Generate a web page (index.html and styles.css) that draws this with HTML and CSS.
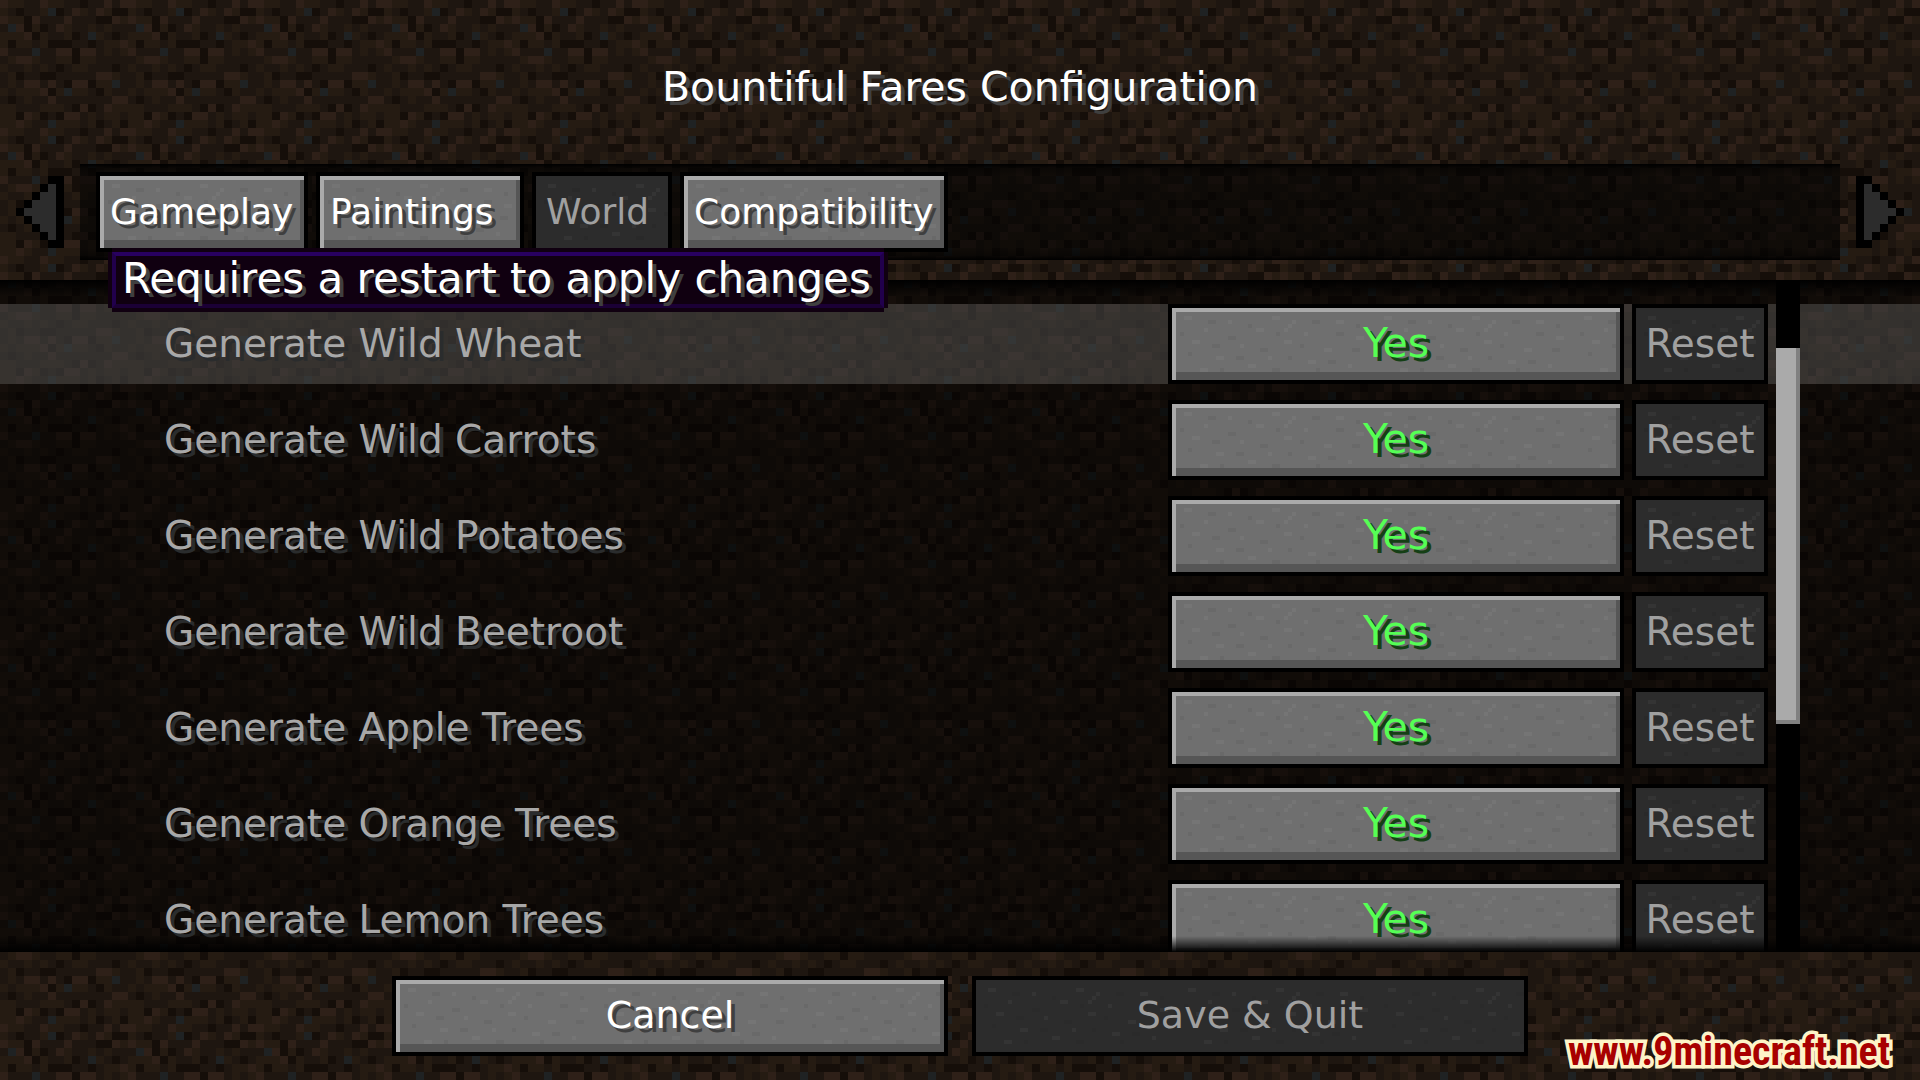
FILE: index.html
```
<!DOCTYPE html>
<html lang="en">
<head>
	<meta charset="UTF-8">
	<meta name="viewport" content="width=device-width, initial-scale=1.0">
	<title>Bountiful Fares Configuration</title>
	<link rel="stylesheet" href="styles.css">
</head>
<body>
	<header>
		<h1>Bountiful Fares Configuration</h1>
		<nav class="tab-nav">
			<button type="button" class="arrow" aria-label="Previous tabs" disabled>
				<svg viewBox="0 0 6 9" shape-rendering="crispEdges">
					<path fill="#000" d="M6 0v9H4V8H3V7H2V6H1V5H0V4h1V3h1V2h1V1h1V0z"/>
					<path fill="#2c2c2c" d="M5 1v7H4V7H3V6H2V5H1V4h1V3h1V2h1V1z"/>
				</svg>
			</button>
			<div class="tabs">
				<button type="button" class="btn tab tab-gameplay">Gameplay</button>
				<button type="button" class="btn tab tab-paintings">Paintings</button>
				<button type="button" class="btn tab tab-world" disabled>World</button>
				<button type="button" class="btn tab tab-compat">Compatibility</button>
				<div class="tooltip" role="tooltip">Requires a restart to apply changes</div>
			</div>
			<button type="button" class="arrow" aria-label="Next tabs" disabled>
				<svg viewBox="0 0 6 9" shape-rendering="crispEdges">
					<path fill="#000" d="M0 0v9h2V8h1V7h1V6h1V5h1V4H5V3H4V2H3V1H2V0z"/>
					<path fill="#2c2c2c" d="M1 1v7h1V7h1V6h1V5h1V4H4V3H3V2H2V1z"/>
				</svg>
			</button>
		</nav>
	</header>

	<main class="options">
		<div class="row active">
			<label for="wheat">Generate Wild Wheat</label>
			<button type="button" class="btn value" id="wheat">Yes</button>
			<button type="button" class="btn reset" disabled>Reset</button>
		</div>
		<div class="row">
			<label for="carrots">Generate Wild Carrots</label>
			<button type="button" class="btn value" id="carrots">Yes</button>
			<button type="button" class="btn reset" disabled>Reset</button>
		</div>
		<div class="row">
			<label for="potatoes">Generate Wild Potatoes</label>
			<button type="button" class="btn value" id="potatoes">Yes</button>
			<button type="button" class="btn reset" disabled>Reset</button>
		</div>
		<div class="row">
			<label for="beetroot">Generate Wild Beetroot</label>
			<button type="button" class="btn value" id="beetroot">Yes</button>
			<button type="button" class="btn reset" disabled>Reset</button>
		</div>
		<div class="row">
			<label for="apple">Generate Apple Trees</label>
			<button type="button" class="btn value" id="apple">Yes</button>
			<button type="button" class="btn reset" disabled>Reset</button>
		</div>
		<div class="row">
			<label for="orange">Generate Orange Trees</label>
			<button type="button" class="btn value" id="orange">Yes</button>
			<button type="button" class="btn reset" disabled>Reset</button>
		</div>
		<div class="row">
			<label for="lemon">Generate Lemon Trees</label>
			<button type="button" class="btn value" id="lemon">Yes</button>
			<button type="button" class="btn reset" disabled>Reset</button>
		</div>
		<div class="scrollbar"><div class="thumb"></div></div>
	</main>

	<footer>
		<button type="button" class="btn">Cancel</button>
		<button type="button" class="btn" disabled>Save &amp; Quit</button>
	</footer>
	<a class="watermark" href="#">www.9minecraft.net</a>
</body>
</html>
```
FILE: styles.css
```
* {
	box-sizing: border-box;
}
body {
	margin: 0;
	height: 100vh;
	display: flex;
	flex-direction: column;
	overflow: hidden;
	position: relative;
	font-family: "DejaVu Sans", sans-serif;
	font-size: 38px;
	color: #fff;
	background-color: #1e1610;
	/* 16x16 dirt tile, each cell drawn 8px wide */
	background-image: url("data:image/svg+xml,%3Csvg xmlns='http://www.w3.org/2000/svg' width='128' height='128' viewBox='0 0 16 16' shape-rendering='crispEdges'%3E%3Cg fill='none' transform='translate(0 .5)'%3E%3Cpath stroke='%23251b12' d='M1 0h2M6 0h2M0 1h1M5 1h1M10 1h1M13 1h1M1 2h2M15 2h1M4 3h1M8 3h1M11 3h1M13 3h1M0 4h3M5 4h1M8 4h1M12 4h1M0 5h1M2 5h2M5 5h1M13 5h2M13 6h1M15 6h1M1 7h1M4 7h1M7 7h2M10 7h2M0 8h1M3 8h1M5 8h1M9 8h2M1 9h1M14 9h1M1 10h1M12 10h2M0 11h1M2 11h3M7 11h1M9 11h2M13 11h1M3 12h1M0 13h2M5 13h3M14 13h2M0 14h2M4 14h1M11 14h1M13 14h2M0 15h2M3 15h1M7 15h3M11 15h1M14 15h1'/%3E%3Cpath stroke='%232e2018' d='M0 0h1M5 0h1M13 0h1M15 0h1M9 1h1M12 1h1M0 2h1M4 2h1M8 2h1M14 2h1M2 3h1M7 3h1M3 4h1M15 5h1M0 6h1M7 6h2M10 6h2M2 7h2M12 9h2M3 10h2M6 10h1M9 10h2M5 11h1M6 12h1M14 12h2M10 13h1M13 13h1M3 14h1M8 14h2M2 15h1'/%3E%3Cpath stroke='%23150e09' d='M10 0h1M2 1h1M7 1h1M14 1h2M3 2h1M12 2h2M3 3h1M5 3h1M4 4h1M9 4h1M14 4h1M1 5h1M6 5h3M11 5h1M9 6h1M9 7h1M7 8h1M14 8h1M2 9h1M5 9h2M8 10h1M11 10h1M6 11h1M12 11h1M1 12h1M9 13h1M11 13h1M2 14h1M5 14h1M7 14h1M12 15h1M15 15h1'/%3E%3Cpath stroke='%231f2223' d='M6 1h1M1 3h1M11 4h1M4 6h1M14 10h1M8 11h1M6 15h1'/%3E%3C/g%3E%3C/svg%3E");
}
h1 {
	margin: 0 0 52px;
	font-size: 41px;
	font-weight: normal;
	line-height: 50px;
	text-align: center;
	text-shadow: 4px 4px #3f3f3f;
}
header {
	padding: 62px 16px 20px;
}
button {
	font-family: inherit;
	font-size: inherit;
	color: inherit;
	padding: 0;
	cursor: pointer;
}
.btn {
	height: 80px;
	padding: 0 0 2px;
	border: 4px solid #000;
	background-color: #6f6f6f;
	/* stone specks */
	background-image: url("data:image/svg+xml,%3Csvg xmlns='http://www.w3.org/2000/svg' width='200' height='72' viewBox='0 0 50 18' shape-rendering='crispEdges'%3E%3Cg fill='none' transform='translate(0 .5)'%3E%3Cpath stroke='%23fff' stroke-opacity='.04' d='M3 2h2M14 3h1M25 2h2M41 3h2M8 5h1M21 5h2M33 6h1M46 7h2M5 8h2M17 9h1M28 8h2M38 10h2M11 12h2M24 12h1M34 13h2M44 14h1M7 15h2M19 14h2M30 3h1M29 4h1M28 5h1'/%3E%3Cpath stroke='%23000' stroke-opacity='.05' d='M9 3h2M19 4h1M35 3h2M46 4h1M2 6h1M14 7h2M26 6h1M41 6h2M10 9h2M22 10h2M32 9h1M45 10h2M4 11h1M16 12h2M29 12h1M39 13h2M12 15h1M25 15h2M36 15h1'/%3E%3C/g%3E%3C/svg%3E");
	box-shadow: inset 4px 4px #aaa, inset -4px -8px #565656;
	text-shadow: 4px 4px #3f3f3f;
}
.btn:disabled {
	background-color: #2c2c2c;
	box-shadow: none;
	text-shadow: none;
	color: #a0a0a0;
	cursor: default;
}
.tab-nav {
	display: flex;
	align-items: center;
	gap: 16px;
}
.arrow {
	width: 48px;
	height: 72px;
	border: none;
	background: none;
}
.arrow svg {
	display: block;
	width: 100%;
	height: 100%;
}
.tabs {
	flex: 1;
	display: flex;
	gap: 8px;
	padding: 8px 16px;
	position: relative;
	background: linear-gradient(#000 0, rgba(0,0,0,.7) 4px, rgba(0,0,0,.56) 12px, rgba(0,0,0,.56) 84px, rgba(0,0,0,.7) 92px, #000 96px);
}
.tab {
	padding-left: 10px;
	font-size: 36px;
	text-align: left;
}
.tab-gameplay {
	width: 212px;
}
.tab-paintings {
	width: 208px;
}
.tab-world {
	width: 140px;
}
.tab-compat {
	width: 268px;
}
.tooltip {
	position: absolute;
	top: 88px;
	left: 32px;
	z-index: 2;
	height: 56px;
	min-width: 772px;
	padding: 0 6px;
	border: 4px solid;
	border-color: #280060 #21004c #1b0035;
	background: #100010;
	box-shadow: 0 -4px #100010, 0 4px #100010, -4px 0 #100010, 4px 0 #100010;
	font-size: 42px;
	line-height: 46px;
	white-space: nowrap;
	text-shadow: 4px 4px #3f3f3f;
}
.options {
	flex: 1;
	min-height: 0;
	display: flex;
	flex-direction: column;
	gap: 16px;
	padding-top: 24px;
	overflow: hidden;
	position: relative;
	background: rgba(0,0,0,.52);
}
/* fade at the top and bottom edge of the list */
.options::before,
.options::after {
	content: "";
	position: absolute;
	left: 0;
	right: 0;
	height: 16px;
	z-index: 1;
}
.options::before {
	top: 0;
	background: linear-gradient(#000, transparent);
}
.options::after {
	bottom: 0;
	background: linear-gradient(transparent, #000);
}
.row {
	flex: none;
	display: flex;
	align-items: center;
	gap: 8px;
	padding: 0 152px 0 164px;
}
.row.active {
	background: rgba(255,255,255,.16);
}
.row label {
	flex: 1;
	padding-bottom: 2px;
	font-size: 39px;
	color: #a8a8a8;
	text-shadow: 4px 4px #2a2c2d;
}
.value {
	width: 456px;
	font-size: 41px;
	color: #5f5;
	text-shadow: 4px 4px #153f15;
}
.reset {
	width: 136px;
	font-size: 39px;
}
.scrollbar {
	position: absolute;
	top: 0;
	bottom: 0;
	right: 120px;
	width: 24px;
	padding-top: 68px;
	background: #000;
}
.thumb {
	height: 376px;
	background: #aaa;
	box-shadow: inset -4px -4px #808080;
}
footer {
	display: flex;
	justify-content: center;
	gap: 24px;
	padding: 24px;
}
footer .btn {
	width: 556px;
}
.watermark {
	position: absolute;
	right: 30px;
	bottom: 4px;
	font-family: "Roboto Condensed", "Liberation Sans Narrow", sans-serif;
	font-size: 40px;
	font-weight: bold;
	line-height: 48px;
	color: #a80000;
	text-decoration: none;
	-webkit-text-stroke: 7px #fdf3c8;
	paint-order: stroke fill;
}
```
